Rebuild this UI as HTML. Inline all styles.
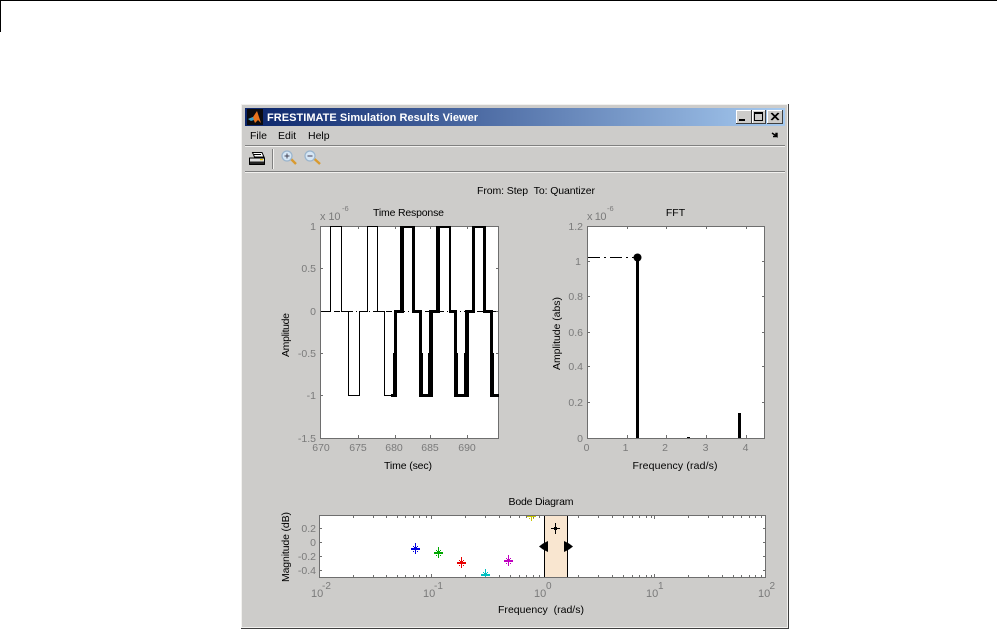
<!DOCTYPE html>
<html><head><meta charset="utf-8"><style>
html,body{margin:0;padding:0;background:#fff;width:997px;height:629px;overflow:hidden}
svg{display:block}
text{font-family:"Liberation Sans",sans-serif;font-size:10.500px;fill:#000}
.t{fill:#7a7a7a;font-size:10.500px}
.u{fill:#7a7a7a;font-size:11px}
.e{text-anchor:end}.c{text-anchor:middle}
</style></head><body>
<svg width="997" height="629" viewBox="0 0 997 629" shape-rendering="crispEdges">
<defs>
<linearGradient id="g" x1="0" x2="1" y1="0" y2="0"><stop offset="0" stop-color="#0a246a"/><stop offset="1" stop-color="#a6caf0"/></linearGradient>
<path id="s" d="M-4 0h9v2h-9zM0 -5h1v11h-1zM-1 -1h3v3h-3zM-2 -2h1v1h-1zM2 -2h1v1h-1zM-2 3h1v1h-1zM2 3h1v1h-1z"/>
<clipPath id="p"><rect x="320" y="516" width="445" height="61"/></clipPath>
</defs>
<rect x="0" y="0" width="997" height="1" fill="#000"/>
<rect x="0" y="0" width="1" height="32" fill="#000"/>
<!-- window -->
<rect x="241" y="104" width="548" height="525" fill="#3f3f3f"/>
<rect x="241" y="104" width="547" height="524" fill="#f2f1ef"/>
<rect x="242" y="105" width="545" height="522" fill="#cdccca"/>
<rect x="245" y="108" width="540" height="18" fill="url(#g)"/>
<!-- matlab logo -->
<rect x="247" y="109" width="16" height="16" fill="#0b0b10"/>
<path d="M248 119l5-2 4-6 4 12-3-3-3 3-2-5z" fill="#e8731c" shape-rendering="auto"/>
<path d="M248 119l5-2 1 3-3 1z" fill="#3aa0c8" shape-rendering="auto"/>
<text x="267" y="121" style="font-size:11px;font-weight:bold;fill:#fff" textLength="211">FRESTIMATE Simulation Results Viewer</text>
<!-- window buttons -->
<g>
<rect x="736" y="110" width="16" height="14" fill="#3f3f3f"/><rect x="736" y="110" width="15" height="13" fill="#fff"/><rect x="737" y="111" width="14" height="12" fill="#cdccca"/><rect x="739" y="119" width="6" height="2" fill="#000"/>
<rect x="752" y="110" width="14" height="14" fill="#3f3f3f"/><rect x="752" y="110" width="13" height="13" fill="#fff"/><rect x="753" y="111" width="12" height="12" fill="#cdccca"/><rect x="754.500" y="112.500" width="8" height="8" fill="none" stroke="#000"/><rect x="754" y="112" width="9" height="2" fill="#000"/>
<rect x="767" y="110" width="16" height="14" fill="#3f3f3f"/><rect x="767" y="110" width="15" height="13" fill="#fff"/><rect x="768" y="111" width="14" height="12" fill="#cdccca"/>
<path d="M771 113l7 7M772 113l7 7M778 113l-7 7M779 113l-7 7" stroke="#000" stroke-width="1" shape-rendering="auto"/>
</g>
<!-- menu -->
<text x="250" y="139" style="font-size:10.500px">File</text>
<text x="278" y="139" style="font-size:10.500px">Edit</text>
<text x="308" y="139" style="font-size:10.500px">Help</text>
<path d="M772 133l5 3.500v-3l-1 0v3h-3" stroke="#000" fill="none" stroke-width="1.400" shape-rendering="auto"/>
<rect x="245" y="145" width="540" height="1" fill="#808080"/><rect x="245" y="146" width="540" height="1" fill="#f2f1ef"/>
<rect x="245" y="171" width="540" height="1" fill="#808080"/><rect x="245" y="172" width="540" height="1" fill="#f2f1ef"/>
<!-- toolbar -->
<g shape-rendering="auto">
<path d="M252.500 152.500h9.500l2 4.500h-9.500z" fill="#fff" stroke="#000"/>
<path d="M249.500 158h15v6.500h-15z" fill="#ddd" stroke="#000" stroke-linejoin="round"/>
<rect x="250" y="161.500" width="14" height="2.500" fill="#222"/>
<rect x="254" y="154" width="7" height="1" fill="#000"/>
<rect x="260" y="159" width="3" height="1.200" fill="#e8c400"/>
<line x1="291" y1="159" x2="296" y2="164" stroke="#d89a30" stroke-width="2.400"/>
<circle cx="287" cy="156" r="5" fill="#d5e6f5" stroke="#9ab4cc" stroke-width="1.200"/>
<path d="M284.500 156h5M287 153.500v5" stroke="#445" stroke-width="1"/>
<line x1="314.500" y1="159" x2="320" y2="164" stroke="#d89a30" stroke-width="2.400"/>
<circle cx="310" cy="156" r="5" fill="#d5e6f5" stroke="#9ab4cc" stroke-width="1.200"/>
<path d="M307.500 156h5" stroke="#778" stroke-width="1.500"/>
</g>
<rect x="272" y="149" width="1" height="20" fill="#808080"/><rect x="273" y="149" width="1" height="20" fill="#f2f1ef"/>
<text x="477" y="194" textLength="118">From: Step&#160;&#160;To: Quantizer</text>

<!-- Axes 1 -->
<text x="373" y="216" textLength="71">Time Response</text>
<text x="320" y="220" class="u" textLength="20.500">x 10</text><text x="342" y="211" class="t" style="font-size:7.500px">-6</text>
<rect x="320.500" y="226.500" width="178" height="212" fill="#fff" stroke="#6e6e6e"/>
<g fill="#6e6e6e">
<rect x="321" y="268" width="2" height="1"/><rect x="321" y="311" width="2" height="1"/><rect x="321" y="353" width="2" height="1"/><rect x="321" y="395" width="2" height="1"/>
<rect x="496" y="268" width="2" height="1"/><rect x="496" y="311" width="2" height="1"/><rect x="496" y="353" width="2" height="1"/><rect x="496" y="395" width="2" height="1"/>
<rect x="358" y="435" width="1" height="3"/><rect x="395" y="435" width="1" height="3"/><rect x="430" y="435" width="1" height="3"/><rect x="467" y="435" width="1" height="3"/>
<rect x="358" y="227" width="1" height="2"/><rect x="395" y="227" width="1" height="2"/><rect x="430" y="227" width="1" height="2"/><rect x="467" y="227" width="1" height="2"/>
</g>
<line x1="321" y1="311.500" x2="498" y2="311.500" stroke="#000" stroke-dasharray="6 3 1 3"/>
<path d="M321 311.500H330.500V226.500H341.500V311.500H348.500V395.500H359.500V311.500H367.500V226.500H377.500V311.500H384.500V395.500H392" fill="none" stroke="#000"/>
<g fill="#000">
<rect x="400" y="226" width="4" height="87"/><rect x="412" y="226" width="3" height="87"/><rect x="436" y="226" width="4" height="87"/><rect x="449" y="226" width="2" height="87"/><rect x="472" y="226" width="3" height="87"/><rect x="483" y="226" width="3" height="87"/>
<rect x="394" y="310" width="3" height="87"/><rect x="419" y="310" width="3" height="87"/><rect x="429" y="310" width="4" height="87"/><rect x="454" y="310" width="3" height="87"/><rect x="465" y="310" width="4" height="87"/><rect x="490" y="310" width="3" height="87"/>
<rect x="393" y="353" width="4" height="44"/><rect x="419" y="353" width="4" height="44"/><rect x="428" y="353" width="5" height="44"/><rect x="454" y="353" width="4" height="44"/><rect x="464" y="353" width="5" height="44"/><rect x="490" y="353" width="4" height="44"/>
<rect x="394" y="310" width="10" height="3"/><rect x="412" y="310" width="10" height="3"/><rect x="429" y="310" width="11" height="3"/><rect x="449" y="310" width="8" height="3"/><rect x="465" y="310" width="10" height="3"/><rect x="483" y="310" width="10" height="3"/>
<rect x="400" y="226" width="15" height="2"/><rect x="436" y="226" width="15" height="2"/><rect x="472" y="226" width="14" height="2"/>
<rect x="391" y="394" width="6" height="3"/><rect x="419" y="394" width="14" height="3"/><rect x="454" y="394" width="15" height="3"/><rect x="490" y="394" width="9" height="3"/>
</g>
<text x="316" y="230" class="t e">1</text><text x="316" y="272" class="t e">0.5</text><text x="316" y="315" class="t e">0</text>
<text x="316" y="357" class="t e">-0.5</text><text x="316" y="399" class="t e">-1</text><text x="316" y="442" class="t e">-1.5</text>
<text x="321" y="451" class="t c">670</text><text x="358" y="451" class="t c">675</text><text x="394" y="451" class="t c">680</text><text x="430" y="451" class="t c">685</text><text x="467" y="451" class="t c">690</text>
<text x="408" y="469" class="c" textLength="48">Time (sec)</text>
<text transform="translate(289,335) rotate(-90)" class="c" textLength="44">Amplitude</text>

<!-- Axes 2 -->
<text x="675.500" y="216" class="c">FFT</text>
<text x="587" y="220" class="u" textLength="19.500">x 10</text><text x="607" y="211" class="t" style="font-size:7.500px">-6</text>
<rect x="587.500" y="226.500" width="177" height="212" fill="#fff" stroke="#6e6e6e"/>
<g fill="#6e6e6e">
<rect x="588" y="261" width="2" height="1"/><rect x="588" y="296" width="2" height="1"/><rect x="588" y="332" width="2" height="1"/><rect x="588" y="366" width="2" height="1"/><rect x="588" y="402" width="2" height="1"/>
<rect x="762" y="261" width="2" height="1"/><rect x="762" y="296" width="2" height="1"/><rect x="762" y="332" width="2" height="1"/><rect x="762" y="366" width="2" height="1"/><rect x="762" y="402" width="2" height="1"/>
<rect x="627" y="435" width="1" height="3"/><rect x="666" y="435" width="1" height="3"/><rect x="706" y="435" width="1" height="3"/><rect x="746" y="435" width="1" height="3"/>
<rect x="627" y="227" width="1" height="2"/><rect x="666" y="227" width="1" height="2"/><rect x="706" y="227" width="1" height="2"/><rect x="746" y="227" width="1" height="2"/>
</g>
<line x1="588" y1="257.500" x2="634" y2="257.500" stroke="#000" stroke-dasharray="12 4 2 4"/>
<rect x="636" y="258" width="3" height="180" fill="#000"/>
<circle cx="637.500" cy="257.500" r="4" fill="#000" shape-rendering="auto"/>
<rect x="738" y="413" width="3" height="25" fill="#000"/>
<rect x="687" y="437" width="3" height="1" fill="#000"/>
<text x="583" y="230" class="t e">1.2</text><text x="581" y="265" class="t e">1</text><text x="583" y="300" class="t e">0.8</text><text x="583" y="336" class="t e">0.6</text><text x="583" y="370" class="t e">0.4</text><text x="583" y="406" class="t e">0.2</text><text x="583" y="442" class="t e">0</text>
<text x="586.500" y="451" class="t c">0</text><text x="625.500" y="451" class="t c">1</text><text x="665" y="451" class="t c">2</text><text x="705.500" y="451" class="t c">3</text><text x="745.500" y="451" class="t c">4</text>
<text x="675" y="469" class="c" textLength="85">Frequency (rad/s)</text>
<text transform="translate(560,333.500) rotate(-90)" class="c" textLength="73">Amplitude (abs)</text>

<!-- Bode -->
<text x="541" y="505" class="c" textLength="65">Bode Diagram</text>
<rect x="319.500" y="515.500" width="446" height="62" fill="#fff" stroke="#6e6e6e"/>
<rect x="544" y="516" width="24" height="61" fill="#f9e6d0"/>
<rect x="544" y="516" width="1" height="61" fill="#000"/><rect x="567" y="516" width="1" height="61" fill="#000"/>
<g fill="#6e6e6e">
<rect x="320" y="528" width="2" height="1"/><rect x="320" y="542" width="2" height="1"/><rect x="320" y="556" width="2" height="1"/><rect x="320" y="570" width="2" height="1"/>
<rect x="763" y="528" width="2" height="1"/><rect x="763" y="542" width="2" height="1"/><rect x="763" y="556" width="2" height="1"/><rect x="763" y="570" width="2" height="1"/>
<path d="M353 575h1v2h-1zM373 575h1v2h-1zM386 575h1v2h-1zM397 575h1v2h-1zM405 575h1v2h-1zM413 575h1v2h-1zM419 575h1v2h-1zM426 575h1v2h-1zM431 574h1v3h-1zM465 575h1v2h-1zM485 575h1v2h-1zM499 575h1v2h-1zM510 575h1v2h-1zM519 575h1v2h-1zM526 575h1v2h-1zM533 575h1v2h-1zM539 575h1v2h-1zM578 575h1v2h-1zM598 575h1v2h-1zM612 575h1v2h-1zM623 575h1v2h-1zM632 575h1v2h-1zM639 575h1v2h-1zM646 575h1v2h-1zM651 575h1v2h-1zM654 574h1v3h-1zM688 575h1v2h-1zM708 575h1v2h-1zM722 575h1v2h-1zM733 575h1v2h-1zM741 575h1v2h-1zM749 575h1v2h-1zM755 575h1v2h-1zM761 575h1v2h-1z"/>
<path d="M353 516h1v2h-1zM373 516h1v2h-1zM386 516h1v2h-1zM397 516h1v2h-1zM405 516h1v2h-1zM413 516h1v2h-1zM419 516h1v2h-1zM426 516h1v2h-1zM431 516h1v3h-1zM465 516h1v2h-1zM485 516h1v2h-1zM499 516h1v2h-1zM510 516h1v2h-1zM519 516h1v2h-1zM526 516h1v2h-1zM533 516h1v2h-1zM539 516h1v2h-1zM578 516h1v2h-1zM598 516h1v2h-1zM612 516h1v2h-1zM623 516h1v2h-1zM632 516h1v2h-1zM639 516h1v2h-1zM646 516h1v2h-1zM651 516h1v2h-1zM654 516h1v3h-1zM688 516h1v2h-1zM708 516h1v2h-1zM722 516h1v2h-1zM733 516h1v2h-1zM741 516h1v2h-1zM749 516h1v2h-1zM755 516h1v2h-1zM761 516h1v2h-1z"/>
</g>
<!-- star markers -->
<g clip-path="url(#p)">
<use href="#s" transform="translate(415,548)" fill="#0000e0"/>
<use href="#s" transform="translate(438,552)" fill="#00a800"/>
<use href="#s" transform="translate(461,562)" fill="#e80000"/>
<use href="#s" transform="translate(485,574)" fill="#00c0c0"/>
<use href="#s" transform="translate(508,560)" fill="#c000c0"/>
<use href="#s" transform="translate(531,515)" fill="#c8c800"/>
<g fill="#000"><rect x="551" y="528" width="9" height="1"/><rect x="555" y="523" width="1" height="11"/><rect x="554" y="527" width="3" height="3"/></g>
</g>
<!-- handles -->
<path d="M539 546.500l4-3 5-2.500v11l-5-2.500z" fill="#000" shape-rendering="auto"/>
<path d="M573 546.500l-4-3-5-2.500v11l5-2.500z" fill="#000" shape-rendering="auto"/>
<text x="316" y="532" class="t e">0.2</text><text x="316" y="546" class="t e">0</text><text x="316" y="560" class="t e">-0.2</text><text x="316" y="574" class="t e">-0.4</text>
<text x="311" y="597" class="u">10</text><text x="322" y="589" class="t" style="font-size:10px">-2</text>
<text x="423" y="597" class="u">10</text><text x="434" y="589" class="t" style="font-size:10px">-1</text>
<text x="534" y="597" class="u">10</text><text x="546" y="589" class="t" style="font-size:10px">0</text>
<text x="646" y="597" class="u">10</text><text x="658" y="589" class="t" style="font-size:10px">1</text>
<text x="758" y="597" class="u">10</text><text x="769.500" y="589" class="t" style="font-size:10px">2</text>
<text x="541" y="613" class="c" textLength="86">Frequency&#160;&#160;(rad/s)</text>
<text transform="translate(289,547) rotate(-90)" class="c" textLength="70">Magnitude (dB)</text>
</svg>
</body></html>
